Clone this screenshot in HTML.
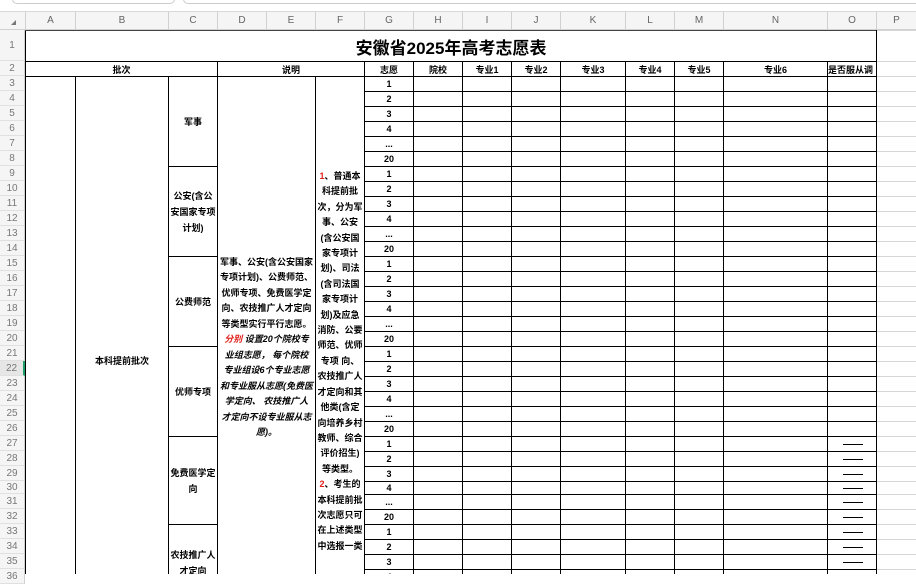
<!DOCTYPE html>
<html><head><meta charset="utf-8">
<style>
*{margin:0;padding:0;box-sizing:border-box}
body{width:916px;height:574px;overflow:hidden;background:#fff;font-family:"Liberation Sans","Noto Sans CJK SC",sans-serif;position:relative}
.topbar{position:absolute;left:0;top:0;width:916px;height:12px;background:#fff;border-bottom:1px solid #d8d8d8}
.tb1{position:absolute;left:12px;top:-8px;width:163px;height:12px;border:1px solid #ccc;border-radius:5px}
.tb2{position:absolute;left:183px;top:-8px;width:740px;height:12px;border:1px solid #ccc;border-radius:5px}
.colh{position:absolute;top:12px;height:18px;background:#f5f5f5;border-bottom:1px solid #d0d0d0;font-size:10px;color:#666;text-align:center;line-height:18px}
.colh span{position:absolute;top:0;height:18px;border-left:1px solid #d0d0d0}
.rowh{position:absolute;left:0;width:25px;background:#f5f5f5;border-right:1px solid #d0d0d0;border-bottom:1px solid #e0e0e0;font-size:10px;color:#777;text-align:center}
.wrap{position:absolute;left:25px;top:30px;width:891px;height:544px;overflow:hidden}
table{border-collapse:collapse;table-layout:fixed;width:891px}
td{border:1px solid #000;padding:0;font-size:9px;font-weight:bold;text-align:center;vertical-align:middle;overflow:hidden;white-space:nowrap;color:#000}
td.p{border:1px solid #d6d6d6;border-left-color:#000}
tr{height:15px}
.title{font-size:17px;font-weight:bold;height:31px;border-top:1px solid #444}
.vt{vertical-align:top;white-space:normal}
.dash{display:inline-block;width:20px;border-top:1px solid #000;vertical-align:middle;margin-left:2px}
.red{color:#e0201c}
</style></head><body>
<div class="topbar"><div class="tb1"></div><div class="tb2"></div></div>
<div class="colh" style="left:0;width:916px">
<span style="left:0;width:25px;border:none;"><i style="position:absolute;left:11px;top:8px;width:0;height:0;border-left:5px solid transparent;border-bottom:5px solid #777"></i></span>
<span style="left:25px;width:50px">A</span><span style="left:75px;width:93px">B</span><span style="left:168px;width:49px">C</span><span style="left:217px;width:49px">D</span><span style="left:266px;width:49px">E</span><span style="left:315px;width:49px">F</span><span style="left:364px;width:49px">G</span><span style="left:413px;width:49px">H</span><span style="left:462px;width:49px">I</span><span style="left:511px;width:49px">J</span><span style="left:560px;width:65px">K</span><span style="left:625px;width:49px">L</span><span style="left:674px;width:49px">M</span><span style="left:723px;width:104px">N</span><span style="left:827px;width:49px">O</span><span style="left:876px;width:40px">P</span>
</div>
<div class="rowh" style="top:30px;height:31px;line-height:31px">1</div>
<div class="rowh" style="top:61px;height:15px;line-height:15px">2</div>
<div class="rowh" style="top:76px;height:15px;line-height:15px">3</div>
<div class="rowh" style="top:91px;height:15px;line-height:15px">4</div>
<div class="rowh" style="top:106px;height:15px;line-height:15px">5</div>
<div class="rowh" style="top:121px;height:15px;line-height:15px">6</div>
<div class="rowh" style="top:136px;height:15px;line-height:15px">7</div>
<div class="rowh" style="top:151px;height:15px;line-height:15px">8</div>
<div class="rowh" style="top:166px;height:15px;line-height:15px">9</div>
<div class="rowh" style="top:181px;height:15px;line-height:15px">10</div>
<div class="rowh" style="top:196px;height:15px;line-height:15px">11</div>
<div class="rowh" style="top:211px;height:15px;line-height:15px">12</div>
<div class="rowh" style="top:226px;height:15px;line-height:15px">13</div>
<div class="rowh" style="top:241px;height:15px;line-height:15px">14</div>
<div class="rowh" style="top:256px;height:15px;line-height:15px">15</div>
<div class="rowh" style="top:271px;height:15px;line-height:15px">16</div>
<div class="rowh" style="top:286px;height:15px;line-height:15px">17</div>
<div class="rowh" style="top:301px;height:15px;line-height:15px">18</div>
<div class="rowh" style="top:316px;height:15px;line-height:15px">19</div>
<div class="rowh" style="top:331px;height:15px;line-height:15px">20</div>
<div class="rowh" style="top:346px;height:15px;line-height:15px">21</div>
<div class="rowh" style="top:361px;height:15px;line-height:15px;background:#e6e6e6;border-right:2px solid #1e9e6a">22</div>
<div class="rowh" style="top:376px;height:15px;line-height:15px">23</div>
<div class="rowh" style="top:391px;height:15px;line-height:15px">24</div>
<div class="rowh" style="top:406px;height:15px;line-height:15px">25</div>
<div class="rowh" style="top:421px;height:15px;line-height:15px">26</div>
<div class="rowh" style="top:436px;height:15px;line-height:15px">27</div>
<div class="rowh" style="top:451px;height:15px;line-height:15px">28</div>
<div class="rowh" style="top:466px;height:15px;line-height:15px">29</div>
<div class="rowh" style="top:481px;height:13px;line-height:13px">30</div>
<div class="rowh" style="top:494px;height:15px;line-height:15px">31</div>
<div class="rowh" style="top:509px;height:15px;line-height:15px">32</div>
<div class="rowh" style="top:524px;height:15px;line-height:15px">33</div>
<div class="rowh" style="top:539px;height:15px;line-height:15px">34</div>
<div class="rowh" style="top:554px;height:15px;line-height:15px">35</div>
<div class="rowh" style="top:569px;height:15px;line-height:15px">36</div>

<div class="wrap"><table>
<colgroup><col style="width:50px"><col style="width:93px"><col style="width:49px"><col style="width:49px"><col style="width:49px"><col style="width:49px"><col style="width:49px"><col style="width:49px"><col style="width:49px"><col style="width:49px"><col style="width:65px"><col style="width:49px"><col style="width:49px"><col style="width:104px"><col style="width:49px"><col style="width:40px"></colgroup>
<tr style="height:31px"><td colspan="15" class="title">安徽省2025年高考志愿表</td><td class="p"></td></tr>
<tr><td colspan="3">批次</td><td colspan="3">说明</td><td>志愿</td><td>院校</td><td>专业1</td><td>专业2</td><td>专业3</td><td>专业4</td><td>专业5</td><td>专业6</td><td style="text-align:left">是否服从调</td><td class="p"></td></tr>
<tr><td rowspan="34"></td><td rowspan="34" class="vt" style="padding-top:277px">本科提前批次</td><td rowspan="6">军事</td>
<td rowspan="34" colspan="2" class="vt" style="padding-top:178px;line-height:15.45px;font-size:9px;white-space:nowrap">军事、公安(含公安国家<br>专项计划)、公费师范、<br>优师专项、免费医学定<br>向、农技推广人才定向<br>等类型实行平行志愿。<br><i><span class="red">分别</span> 设置20个院校专<br>业组志愿， 每个院校<br>专业组设6个专业志愿<br>和专业服从志愿(免费医<br>学定向、 农技推广人<br>才定向不设专业服从志<br>愿)。</i></td>
<td rowspan="34" class="vt" style="padding-top:92px;line-height:15.4px"><span class="red">1</span>、普通本<br>科提前批<br>次，分为军<br>事、公安<br>(含公安国<br>家专项计<br>划)、司法<br>(含司法国<br>家专项计<br>划)及应急<br>消防、公要<br>师范、优师<br>专项 向、<br>农技推广人<br>才定向和其<br>他类(含定<br>向培养乡村<br>教师、综合<br>评价招生)<br>等类型。<br><span class="red">2</span>、考生的<br>本科提前批<br>次志愿只可<br>在上述类型<br>中选报一类</td>
<td>1</td><td></td><td></td><td></td><td></td><td></td><td></td><td></td><td></td><td class="p"></td></tr>
<tr><td>2</td><td></td><td></td><td></td><td></td><td></td><td></td><td></td><td></td><td class="p"></td></tr>
<tr><td>3</td><td></td><td></td><td></td><td></td><td></td><td></td><td></td><td></td><td class="p"></td></tr>
<tr><td>4</td><td></td><td></td><td></td><td></td><td></td><td></td><td></td><td></td><td class="p"></td></tr>
<tr><td>...</td><td></td><td></td><td></td><td></td><td></td><td></td><td></td><td></td><td class="p"></td></tr>
<tr><td>20</td><td></td><td></td><td></td><td></td><td></td><td></td><td></td><td></td><td class="p"></td></tr>
<tr><td rowspan="6" style="white-space:normal;line-height:16px">公安(含公<br>安国家专项<br>计划)</td><td>1</td><td></td><td></td><td></td><td></td><td></td><td></td><td></td><td></td><td class="p"></td></tr>
<tr><td>2</td><td></td><td></td><td></td><td></td><td></td><td></td><td></td><td></td><td class="p"></td></tr>
<tr><td>3</td><td></td><td></td><td></td><td></td><td></td><td></td><td></td><td></td><td class="p"></td></tr>
<tr><td>4</td><td></td><td></td><td></td><td></td><td></td><td></td><td></td><td></td><td class="p"></td></tr>
<tr><td>...</td><td></td><td></td><td></td><td></td><td></td><td></td><td></td><td></td><td class="p"></td></tr>
<tr><td>20</td><td></td><td></td><td></td><td></td><td></td><td></td><td></td><td></td><td class="p"></td></tr>
<tr><td rowspan="6">公费师范</td><td>1</td><td></td><td></td><td></td><td></td><td></td><td></td><td></td><td></td><td class="p"></td></tr>
<tr><td>2</td><td></td><td></td><td></td><td></td><td></td><td></td><td></td><td></td><td class="p"></td></tr>
<tr><td>3</td><td></td><td></td><td></td><td></td><td></td><td></td><td></td><td></td><td class="p"></td></tr>
<tr><td>4</td><td></td><td></td><td></td><td></td><td></td><td></td><td></td><td></td><td class="p"></td></tr>
<tr><td>...</td><td></td><td></td><td></td><td></td><td></td><td></td><td></td><td></td><td class="p"></td></tr>
<tr><td>20</td><td></td><td></td><td></td><td></td><td></td><td></td><td></td><td></td><td class="p"></td></tr>
<tr><td rowspan="6">优师专项</td><td>1</td><td></td><td></td><td></td><td></td><td></td><td></td><td></td><td></td><td class="p"></td></tr>
<tr><td>2</td><td></td><td></td><td></td><td></td><td></td><td></td><td></td><td></td><td class="p"></td></tr>
<tr><td>3</td><td></td><td></td><td></td><td></td><td></td><td></td><td></td><td></td><td class="p"></td></tr>
<tr><td>4</td><td></td><td></td><td></td><td></td><td></td><td></td><td></td><td></td><td class="p"></td></tr>
<tr><td>...</td><td></td><td></td><td></td><td></td><td></td><td></td><td></td><td></td><td class="p"></td></tr>
<tr><td>20</td><td></td><td></td><td></td><td></td><td></td><td></td><td></td><td></td><td class="p"></td></tr>
<tr><td rowspan="6" style="white-space:normal;line-height:16px">免费医学定<br>向</td><td>1</td><td></td><td></td><td></td><td></td><td></td><td></td><td></td><td><span class="dash"></span></td><td class="p"></td></tr>
<tr><td>2</td><td></td><td></td><td></td><td></td><td></td><td></td><td></td><td><span class="dash"></span></td><td class="p"></td></tr>
<tr><td>3</td><td></td><td></td><td></td><td></td><td></td><td></td><td></td><td><span class="dash"></span></td><td class="p"></td></tr>
<tr style="height:13px"><td>4</td><td></td><td></td><td></td><td></td><td></td><td></td><td></td><td><span class="dash"></span></td><td class="p"></td></tr>
<tr><td>...</td><td></td><td></td><td></td><td></td><td></td><td></td><td></td><td><span class="dash"></span></td><td class="p"></td></tr>
<tr><td>20</td><td></td><td></td><td></td><td></td><td></td><td></td><td></td><td><span class="dash"></span></td><td class="p"></td></tr>
<tr><td rowspan="4" class="vt" style="padding-top:22px;line-height:16px">农技推广人<br>才定向</td><td>1</td><td></td><td></td><td></td><td></td><td></td><td></td><td></td><td><span class="dash"></span></td><td class="p"></td></tr>
<tr><td>2</td><td></td><td></td><td></td><td></td><td></td><td></td><td></td><td><span class="dash"></span></td><td class="p"></td></tr>
<tr><td>3</td><td></td><td></td><td></td><td></td><td></td><td></td><td></td><td><span class="dash"></span></td><td class="p"></td></tr>
<tr><td>4</td><td></td><td></td><td></td><td></td><td></td><td></td><td></td><td><span class="dash"></span></td><td class="p"></td></tr>
</table></div>
</body></html>
